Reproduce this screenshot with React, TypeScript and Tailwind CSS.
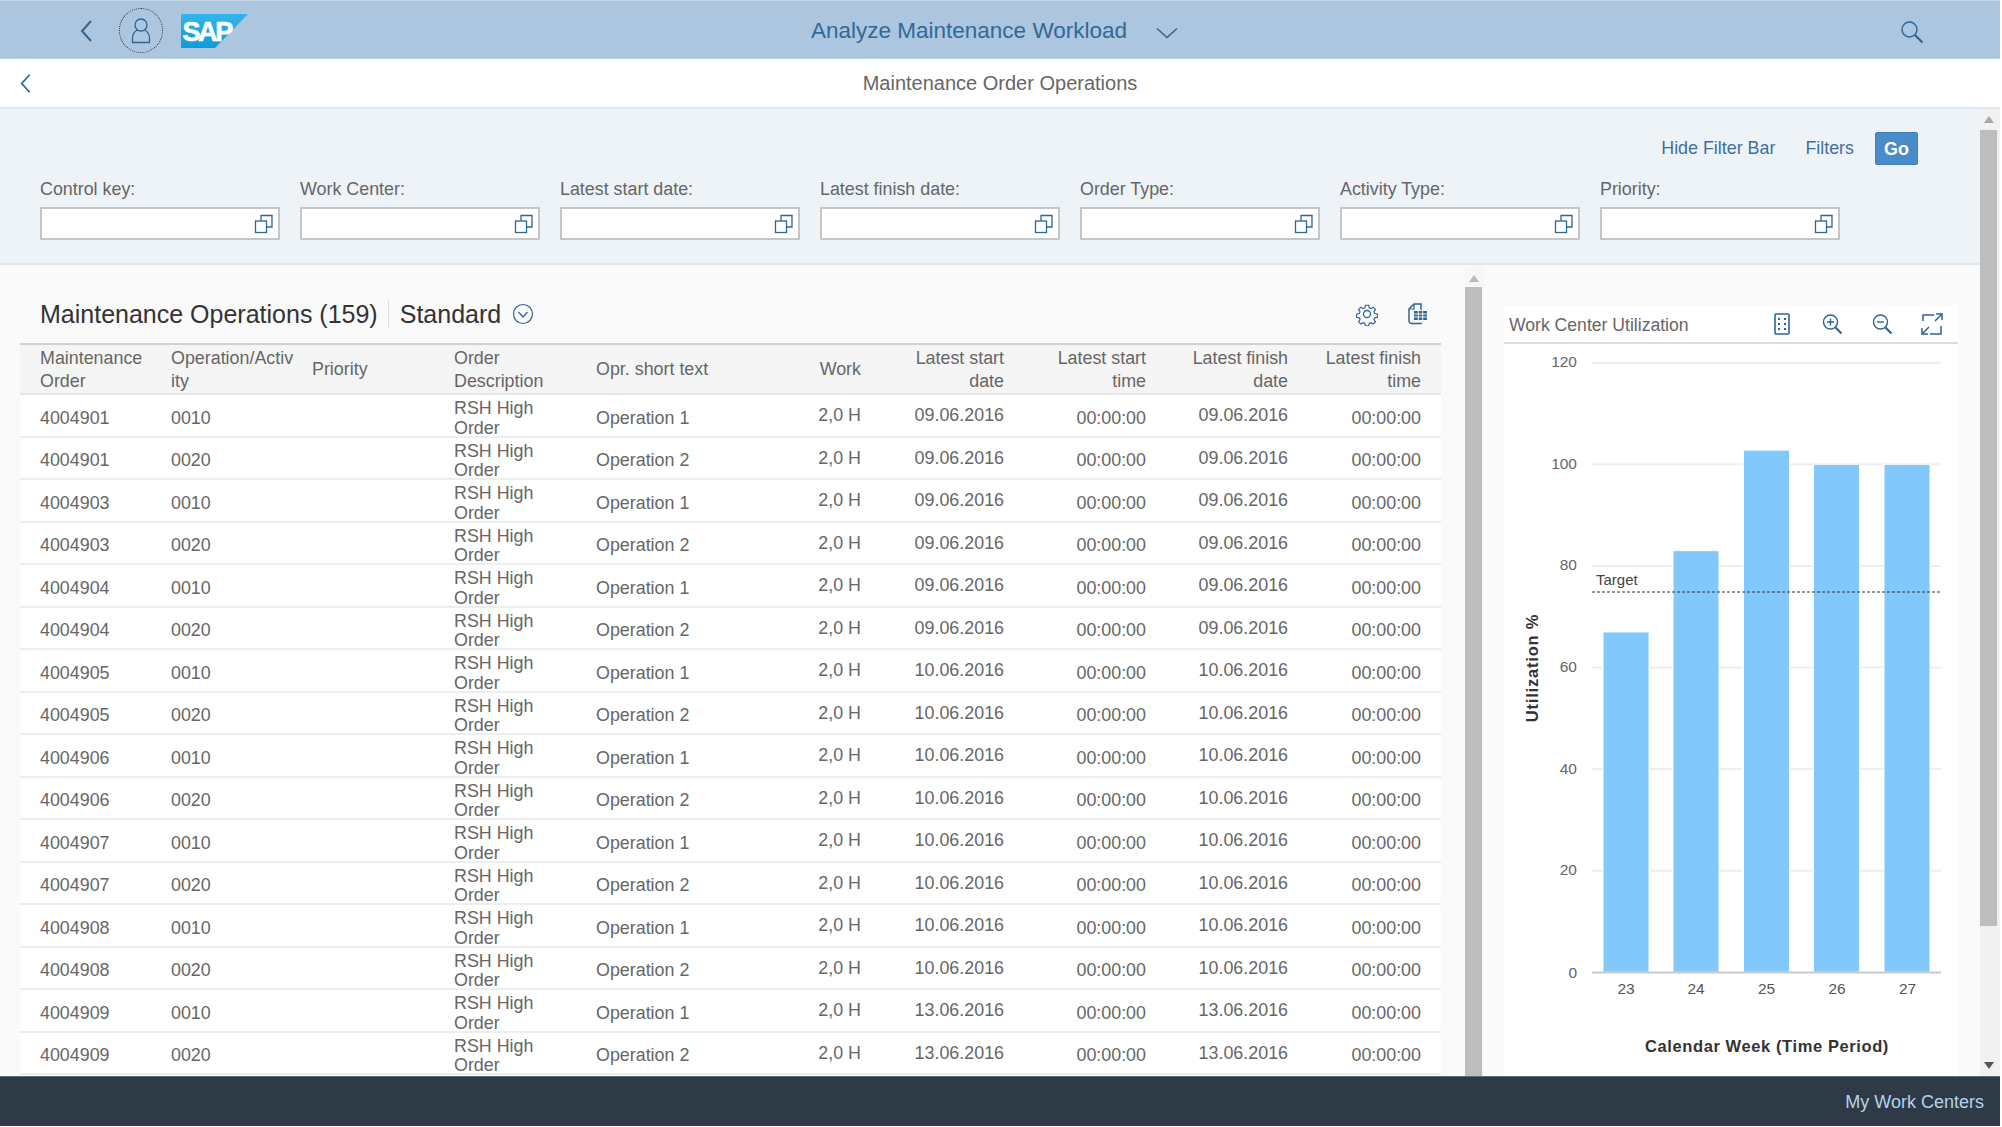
const rows: [string, string, string, string][] = [
  ["4004901", "0010", "Operation 1", "09.06.2016"],
  ["4004901", "0020", "Operation 2", "09.06.2016"],
  ["4004903", "0010", "Operation 1", "09.06.2016"],
  ["4004903", "0020", "Operation 2", "09.06.2016"],
  ["4004904", "0010", "Operation 1", "09.06.2016"],
  ["4004904", "0020", "Operation 2", "09.06.2016"],
  ["4004905", "0010", "Operation 1", "10.06.2016"],
  ["4004905", "0020", "Operation 2", "10.06.2016"],
  ["4004906", "0010", "Operation 1", "10.06.2016"],
  ["4004906", "0020", "Operation 2", "10.06.2016"],
  ["4004907", "0010", "Operation 1", "10.06.2016"],
  ["4004907", "0020", "Operation 2", "10.06.2016"],
  ["4004908", "0010", "Operation 1", "10.06.2016"],
  ["4004908", "0020", "Operation 2", "10.06.2016"],
  ["4004909", "0010", "Operation 1", "13.06.2016"],
  ["4004909", "0020", "Operation 2", "13.06.2016"],
];

const filters = ["Control key:", "Work Center:", "Latest start date:", "Latest finish date:", "Order Type:", "Activity Type:", "Priority:"];
const grid = "grid grid-cols-[141px_141px_142px_142px_145px_150px_143px_142px_142px_133px]";
const blue = "#2f6497";

function ValueHelp() {
  return (
    <svg width="20" height="20" viewBox="0 0 20 20" fill="none" stroke={blue} strokeWidth="1.3">
      <rect x="1.5" y="7" width="11" height="11.5" fill="#fff" />
      <path d="M7 7V1.5H18V13H12.5" />
    </svg>
  );
}

function Chevron({ size = 24 }: { size?: number }) {
  return (
    <svg width={size / 2} height={size} viewBox="0 0 12 24" fill="none" stroke={blue} strokeWidth="2">
      <path d="M11 2 2 12l9 10" />
    </svg>
  );
}

function HeaderCell({ right, children }: { right?: boolean; children: React.ReactNode }) {
  return <div className={`flex items-center pl-[10px] pr-5 pt-[1px] ${right ? "justify-end text-right" : ""}`}>{children}</div>;
}

function Row({ r }: { r: [string, string, string, string] }) {
  return (
    <div className={`${grid} h-[42.5px] shrink-0 border-b-2 border-[#eeeeee] bg-white text-[17.87px] leading-[19.5px] text-[#666666]`}>
      <div className="flex items-center pl-5 pt-[4px]">{r[0]}</div>
      <div className="flex items-center pl-[10px] pt-[4px]">{r[1]}</div>
      <div />
      <div className="flex flex-col justify-center pl-[10px] pt-[4px]"><span>RSH High</span><span>Order</span></div>
      <div className="flex items-center pl-[10px] pt-[4px]">{r[2]}</div>
      <div className="flex items-center justify-end pr-5 pb-[1px]">2,0 H</div>
      <div className="flex items-center justify-end pr-5 pb-[1px]">{r[3]}</div>
      <div className="flex items-center justify-end pr-5 pt-[4px]">00:00:00</div>
      <div className="flex items-center justify-end pr-5 pb-[1px]">{r[3]}</div>
      <div className="flex items-center justify-end pr-5 pt-[4px]">00:00:00</div>
    </div>
  );
}

function Chart() {
  const ticks = [120, 100, 80, 60, 40, 20];
  const y = (v: number) => 972.3 - v * 5.08;
  const bars: [string, number, number, number][] = [["23", 1603, 67, 1626], ["24", 1673, 83, 1696], ["25", 1743.5, 102.8, 1766.5], ["26", 1813.5, 100, 1837], ["27", 1884, 100, 1907.5]];
  const font = "'Liberation Sans', Arial, sans-serif";
  return (
    <svg width="454" height="733" viewBox="1504 344 454 733" className="block" fontFamily={font}>
      {ticks.map((t) => (
        <g key={t}>
          <line x1="1592" x2="1941" y1={y(t)} y2={y(t)} stroke="#eeeeee" strokeWidth="2" />
          <text x="1577" y={y(t) + 4.5} textAnchor="end" fontSize="15.5" fill="#666666">{t}</text>
        </g>
      ))}
      <text x="1577" y="978" textAnchor="end" fontSize="15.5" fill="#666666">0</text>
      {bars.map(([l, x, v, c]) => (
        <g key={l}>
          <rect x={x} y={y(v)} width="46" height={972.3 - y(v)} fill="#82c8fb" stroke="#ffffff" strokeWidth="1" />
          <text x={c} y="994" textAnchor="middle" fontSize="15.5" fill="#555555">{l}</text>
        </g>
      ))}
      <line x1="1592" x2="1941" y1="972.5" y2="972.5" stroke="#c9c9c9" strokeWidth="2" />
      <line x1="1592" x2="1941" y1="592" y2="592" stroke="#333333" strokeWidth="1" strokeDasharray="3 2" />
      <text x="1596" y="584.5" fontSize="15" fill="#444444">Target</text>
      <text x="1767" y="1052" textAnchor="middle" fontSize="16.5" fontWeight="700" letterSpacing="0.6" fill="#333333">Calendar Week (Time Period)</text>
      <text transform="translate(1538 668) rotate(-90)" textAnchor="middle" fontSize="16.5" fontWeight="700" letterSpacing="0.8" fill="#333333">Utilization %</text>
    </svg>
  );
}

export default function App() {
  return (
    <div className="flex h-[1126px] w-[2000px] flex-col overflow-hidden bg-[#fafafa] font-['Liberation_Sans',Arial,sans-serif]">
      {/* shell header */}
      <header className="relative flex h-[59px] shrink-0 items-center border-t border-[#c5d8e8] border-b border-b-[#bcd2e5] bg-[#abc6de] pl-[80px] pt-[2px]">
        <Chevron size={24} />
        <div className="ml-[27px] flex h-[45px] w-[44px] items-center justify-center rounded-full border border-dotted border-[#333333]">
          <svg width="20" height="26" viewBox="0 0 20 26" fill="none" stroke={blue} strokeWidth="1.3">
            <circle cx="10" cy="7" r="6" />
            <path d="M6.5 12C3 13.5 1.5 17 1.5 20.5v4h17v-4c0-3.5-1.5-7-5-8.5" />
          </svg>
        </div>
        <svg width="67" height="34" viewBox="0 0 67 34" className="ml-[18px]" fontFamily="'Liberation Sans', Arial, sans-serif">
          <defs>
            <linearGradient id="sapg" x1="0" y1="0" x2="0" y2="1">
              <stop offset="0" stopColor="#34b4ec" />
              <stop offset="1" stopColor="#0f9ad9" />
            </linearGradient>
          </defs>
          <polygon points="0,0 67,0 34,34 0,34" fill="url(#sapg)" />
          <text x="1.5" y="26.5" fontSize="27" fontWeight="700" fill="#ffffff" letterSpacing="-2.4" stroke="#ffffff" strokeWidth="0.7">SAP</text>
        </svg>
        <div className="absolute left-[811px] top-[17px] flex items-center text-[22.5px] leading-[26px] text-[#33689b]">
          Analyze Maintenance Workload
          <svg width="22" height="12" viewBox="0 0 22 12" fill="none" stroke={blue} strokeWidth="1.5" className="ml-[29px] mt-1">
            <path d="M1 1.5 11 10.5 21 1.5" />
          </svg>
        </div>
        <svg width="24" height="24" viewBox="0 0 24 24" fill="none" stroke={blue} strokeWidth="1.4" className="absolute left-[1900px] top-[19px]">
          <circle cx="9.5" cy="9.5" r="7.5" />
          <path d="M15 15l7.5 7.5" strokeWidth="2.2" />
        </svg>
      </header>

      {/* sub header */}
      <div className="relative flex h-[50px] shrink-0 items-center justify-center border-b-2 border-[#dfe8f2] bg-white text-[20px] text-[#666666]">
        <div className="absolute left-[20px] top-[14px]"><Chevron size={21} /></div>
        Maintenance Order Operations
      </div>

      <div className="flex min-h-0 flex-1">
        <div className="flex min-w-0 flex-1 flex-col">
          {/* filter bar */}
          <section className="h-[156px] shrink-0 border-b-2 border-[#dfe8f2] bg-[#eef3f8] pl-10">
            <div className="flex h-[56px] items-end justify-end pr-[62px] text-[17.87px] leading-[33px] text-[#3f6f9f]">
              <span>Hide Filter Bar</span>
              <span className="ml-[30px]">Filters</span>
              <span className="ml-[21px] h-[33px] w-[43px] rounded-[2px] border border-[#3f7fbb] bg-[#4a8bc9] text-center font-bold text-white">Go</span>
            </div>
            <div className="mt-[14px] flex gap-5">
              {filters.map((f) => (
                <div key={f} className="w-[240px]">
                  <div className="text-[17.87px] leading-5 text-[#666666]">{f}</div>
                  <div className="mt-2 flex h-[33px] items-center justify-end border-2 border-[#c4c6c8] bg-white pr-[4px]"><ValueHelp /></div>
                </div>
              ))}
            </div>
          </section>

          <div className="flex min-h-0 flex-1">
            {/* table panel */}
            <section className="flex w-[1465px] shrink-0 flex-col overflow-hidden bg-[#fafafa] pl-5 pr-[24px]">
              <div className="flex h-[78px] shrink-0 items-center pl-5 pt-[20px]">
                <span className="text-[25px] leading-8 text-[#333333]">Maintenance Operations (159)</span>
                <span className="ml-[10px] h-7 w-px bg-[#dddddd]" />
                <span className="ml-[11px] text-[25px] leading-8 text-[#333333]">Standard</span>
                <svg width="22" height="22" viewBox="0 0 22 22" fill="none" stroke={blue} strokeWidth="1.2" className="ml-[11px]">
                  <circle cx="11" cy="11" r="9.5" />
                  <path d="M6.5 9 11 14l4.5-5" />
                </svg>
                <svg width="24" height="24" viewBox="0 0 24 24" fill="none" stroke={blue} strokeWidth="1.3" className="ml-auto">
                  <circle cx="12" cy="12" r="3.5" />
                  <path d="M10.2 2.5h3.6l.6 2.9 1.9.8 2.5-1.6 2.5 2.5-1.6 2.5.8 1.9 2.9.6v3.6l-2.9.6-.8 1.9 1.6 2.5-2.5 2.5-2.5-1.6-1.9.8-.6 2.6h-3.6l-.6-2.6-1.9-.8-2.5 1.6-2.5-2.5 1.6-2.5-.8-1.9-2.9-.6v-3.6l2.9-.6.8-1.9-1.6-2.5 2.5-2.5 2.5 1.6 1.9-.8z" transform="translate(1.1 1) scale(.91)" />
                </svg>
                <svg width="24" height="24" viewBox="0 0 24 24" fill="none" stroke={blue} strokeWidth="1.5" className="ml-[26px] mr-[12px]">
                  <path d="M17 21.5H6.5A2.5 2.5 0 0 1 4 19V7l5-5h7v6" />
                  <path d="M9 2v5H4" strokeWidth="1.2" />
                  <rect x="9" y="9" width="13" height="9" fill={blue} stroke="none" />
                  <path d="M9 12h13M9 15h13M13.3 9v9M17.7 9v9" stroke="#fff" strokeWidth="0.9" />
                </svg>
              </div>
              <div className={`${grid} h-[52px] shrink-0 border-y-2 border-t-[#d0d0d0] border-b-[#e6e6e6] bg-[#f5f5f5] text-[17.87px] leading-[23px] text-[#666666]`}>
                <div className="flex items-center pl-5 pr-2 pt-[1px]">Maintenance Order</div>
                <HeaderCell><span className="whitespace-nowrap">Operation/Activ<br />ity</span></HeaderCell>
                <HeaderCell>Priority</HeaderCell>
                <HeaderCell>Order Description</HeaderCell>
                <HeaderCell>Opr. short text</HeaderCell>
                <HeaderCell right>Work</HeaderCell>
                <HeaderCell right>Latest start date</HeaderCell>
                <HeaderCell right>Latest start time</HeaderCell>
                <HeaderCell right>Latest finish date</HeaderCell>
                <HeaderCell right>Latest finish time</HeaderCell>
              </div>
              {rows.map((r, i) => <Row key={i} r={r} />)}
            </section>

            {/* inner scrollbar */}
            <div className="flex w-[19px] shrink-0 flex-col bg-[#f7f7f7] pr-[2px]">
              <div className="flex h-[22px] shrink-0 items-center justify-center pt-1">
                <div className="h-0 w-0 border-x-[5px] border-b-[7px] border-x-transparent border-b-[#bbbbbb]" />
              </div>
              <div className="flex-1 bg-[#bdbdbd]" />
            </div>

            {/* chart panel */}
            <section className="flex-1 bg-[#fafafa] pl-[20px] pr-[22px] pt-[40px]">
              <div className="flex h-[39px] items-center border-b-2 border-[#dddddd] bg-white pl-[5px] text-[17.6px] text-[#666666]">
                <span className="pt-[3px]">Work Center Utilization</span>
                <div className="ml-auto flex items-center gap-[26px] pr-[14px] pt-[1px]">
                  <svg width="24" height="24" viewBox="0 0 24 24" fill="none" stroke={blue} strokeWidth="1.6">
                    <rect x="5" y="2" width="14" height="20" rx="1" />
                    <path d="M8 7h2M14 7h2M8 12h2M14 12h2M8 17h2M14 17h2" strokeWidth="2.2" />
                  </svg>
                  <svg width="24" height="24" viewBox="0 0 24 24" fill="none" stroke={blue} strokeWidth="1.4">
                    <circle cx="10.5" cy="10" r="7" />
                    <path d="M7 10h7M10.5 6.5v7" />
                    <path d="M15.5 15.5l6 6" strokeWidth="2.2" />
                  </svg>
                  <svg width="24" height="24" viewBox="0 0 24 24" fill="none" stroke={blue} strokeWidth="1.4">
                    <circle cx="10.5" cy="10" r="7" />
                    <path d="M7 10h7" />
                    <path d="M15.5 15.5l6 6" strokeWidth="2.2" />
                  </svg>
                  <svg width="24" height="24" viewBox="0 0 24 24" fill="none" stroke={blue} strokeWidth="1.5">
                    <path d="M3 9V3h11M15 9l7-7M16 2h6v6" />
                    <path d="M21 14v8H10M9 15l-7 7M2 16v6h6" />
                  </svg>
                </div>
              </div>
              <div className="h-full bg-white"><Chart /></div>
            </section>
          </div>
        </div>

        {/* page scrollbar */}
        <aside className="flex w-[20px] shrink-0 flex-col bg-[#f1f1f1] pr-[3px]">
          <div className="flex h-[21px] shrink-0 items-center justify-center">
            <div className="h-0 w-0 border-x-[5px] border-b-[7px] border-x-transparent border-b-[#a8a8a8]" />
          </div>
          <div className="h-[796px] shrink-0 bg-[#bdbdbd]" />
          <div className="mt-auto flex h-[22px] items-center justify-center">
            <div className="h-0 w-0 border-x-[5px] border-t-[7px] border-x-transparent border-t-[#555555]" />
          </div>
        </aside>
      </div>

      {/* footer */}
      <footer className="flex h-[50px] shrink-0 items-center justify-end border-t border-[#5a6c7c] bg-[#2f3a47] pr-[16px] pt-[2px] text-[18px] text-[#b4d2ee]">
        My Work Centers
      </footer>
    </div>
  );
}
